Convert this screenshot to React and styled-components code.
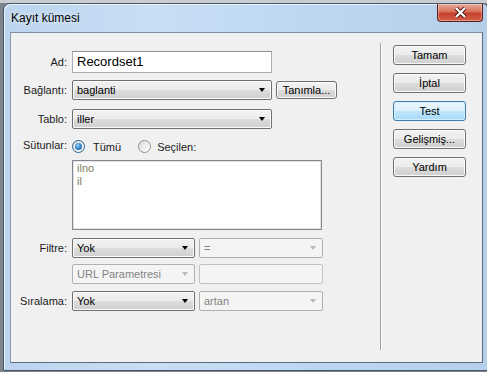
import React from 'react'
import styled, { createGlobalStyle } from 'styled-components'

const GlobalStyle = createGlobalStyle`
    html, body {
        margin: 0;
        padding: 0;
        background: #9ea4ab;
        overflow: hidden;
    }
    body {
        font-family: "Liberation Sans", Arial, sans-serif;
        font-size: 11px;
        color: #1b1b1b;
    }
`

const Page = styled.div`
    width: 487px;
    height: 372px;
    padding: 3px 0 0 3px;
    box-sizing: border-box;
    background: linear-gradient(#c9cdd2 0, #c9cdd2 3px, #7d848c 3px);
`

const Window = styled.div`
    box-sizing: border-box;
    width: 486px;
    height: 368px;
    border: 1px solid #48566a;
    border-radius: 7px 7px 2px 2px;
    padding: 0 5px 7px 6px;
    background: linear-gradient(90deg, #bcd4ee 0%, #c8def5 30%, #bfd8f2 60%, #b5cfea 100%);
    box-shadow: inset 1px 1px 0 rgba(255, 255, 255, 0.7);
    display: flex;
    flex-direction: column;
`

const TitleBar = styled.div`
    height: 28px;
    display: flex;
    justify-content: space-between;
    align-items: flex-start;
    flex-shrink: 0;
`

const Title = styled.div`
    font-size: 12px;
    color: #000;
    padding: 7px 0 0 1px;
    text-shadow: 0 0 6px rgba(255, 255, 255, 0.9);
`

const CloseButton = styled.div`
    width: 46px;
    height: 18px;
    box-sizing: border-box;
    border: 1px solid #5a2020;
    border-top: none;
    border-radius: 0 0 4px 4px;
    background: linear-gradient(#e9a99a 0%, #d8705a 45%, #c4402a 55%, #d2614a 100%);
    box-shadow: inset 0 0 0 1px rgba(255, 255, 255, 0.35);
    display: flex;
    align-items: center;
    justify-content: center;
`

const Client = styled.div`
    flex: 1;
    box-sizing: border-box;
    border: 1px solid #5c6c80;
    border-top-color: #7f8ea2;
    border-left-color: #8b9ab0;
    background: #f0f0f0;
    display: flex;
`

const Form = styled.div`
    width: 369px;
    display: flex;
    flex-direction: column;
`

const Row = styled.div`
    display: flex;
    align-items: center;
    margin-top: ${p => p.$gap}px;
`

const Label = styled.div`
    width: 56px;
    margin-right: 5px;
    text-align: right;
    white-space: nowrap;
`

const Spacer = styled.div`
    width: 61px;
    flex-shrink: 0;
`

const TextInput = styled.div`
    box-sizing: border-box;
    width: 200px;
    height: 22px;
    border: 1px solid #abadb3;
    border-top-color: #8e9096;
    background: #fff;
    font-size: 13px;
    padding: 2px 0 0 4px;
    color: #000;
`

const Select = styled.div`
    box-sizing: border-box;
    width: ${p => p.$w}px;
    height: 20px;
    margin-right: ${p => p.$mr || 0}px;
    border: 1px solid ${p => (p.$disabled ? '#adb2b5' : '#707070')};
    border-radius: 2px;
    background: ${p =>
        p.$disabled
            ? '#f4f4f4'
            : 'linear-gradient(#f2f2f2 0%, #ebebeb 50%, #dddddd 51%, #cfcfcf 100%)'};
    box-shadow: ${p => (p.$disabled ? 'none' : 'inset 0 0 0 1px #fbfbfb')};
    color: ${p => (p.$disabled ? '#838383' : '#000')};
    display: flex;
    align-items: center;
    justify-content: space-between;
    padding: 0 6px 0 4px;
    flex-shrink: 0;
`

const Arrow = styled.span`
    width: 0;
    height: 0;
    border-left: 3.5px solid transparent;
    border-right: 3.5px solid transparent;
    border-top: 4px solid ${p => (p.$disabled ? '#b8b8b8' : '#000')};
`

const PlainBox = styled.div`
    box-sizing: border-box;
    width: ${p => p.$w}px;
    height: 20px;
    border: 1px solid #c3c3c3;
    border-radius: 2px;
    background: #f4f4f4;
`

const Button = styled.div`
    box-sizing: border-box;
    width: ${p => p.$w || 73}px;
    height: ${p => p.$h || 20}px;
    border: 1px solid ${p => (p.$focus ? '#3c7fb1' : '#707070')};
    border-radius: 3px;
    background: ${p =>
        p.$focus
            ? 'linear-gradient(#eaf6fd 0%, #d9f0fc 50%, #bee6fd 51%, #a7d9f5 100%)'
            : 'linear-gradient(#f2f2f2 0%, #ebebeb 50%, #dddddd 51%, #cfcfcf 100%)'};
    box-shadow: inset 0 0 0 1px ${p => (p.$focus ? '#d6eefb' : '#fbfbfb')};
    display: flex;
    align-items: center;
    justify-content: center;
    color: #000;
    flex-shrink: 0;
`

const RadioGroup = styled.div`
    display: flex;
    align-items: center;
    padding-top: 2px;
`

const Radio = styled.span`
    box-sizing: border-box;
    width: 13px;
    height: 13px;
    border-radius: 50%;
    border: 1px solid ${p => (p.$checked ? '#2c628b' : '#8e8f8f')};
    background: linear-gradient(135deg, #dcdcdc, #ffffff);
    display: flex;
    align-items: center;
    justify-content: center;
    margin-right: ${p => p.$mr}px;
    &::after {
        content: '';
        display: ${p => (p.$checked ? 'block' : 'none')};
        width: 7px;
        height: 7px;
        border-radius: 50%;
        background: radial-gradient(circle at 40% 35%, #9ad4ff 0%, #3a8cd0 45%, #16508a 100%);
    }
`

const RadioText = styled.span`
    margin-right: ${p => p.$mr || 0}px;
    padding-top: 2px;
`

const ListBox = styled.div`
    box-sizing: border-box;
    width: 250px;
    height: 70px;
    border: 1px solid #828790;
    box-shadow: inset 0 0 0 1px #e3e3e3;
    background: #fff;
    padding: 1px 0 0 4px;
    color: #7f7e62;
    line-height: 13px;
`

const Separator = styled.div`
    width: 1px;
    margin: 10px 0 12px;
    background: #a0a0a0;
    box-shadow: 1px 0 0 #fff;
`

const ButtonColumn = styled.div`
    flex: 1;
    padding: 12px 0 0 12px;
    display: flex;
    flex-direction: column;
    gap: 8px;
`

const CloseIcon = () => (
    <svg width="13" height="11" viewBox="0 0 13 11">
        <path
            d="M2 1 L11 10 M11 1 L2 10"
            stroke="#4a1414"
            strokeWidth="4"
            fill="none"
        />
        <path
            d="M2 1 L11 10 M11 1 L2 10"
            stroke="#fff"
            strokeWidth="2.2"
            fill="none"
        />
    </svg>
)

const App = () => {
    return (
        <Page>
            <GlobalStyle />
            <Window>
                <TitleBar>
                    <Title>Kayıt kümesi</Title>
                    <CloseButton>
                        <CloseIcon />
                    </CloseButton>
                </TitleBar>
                <Client>
                    <Form>
                        <Row $gap={18}>
                            <Label>Ad:</Label>
                            <TextInput>Recordset1</TextInput>
                        </Row>
                        <Row $gap={7}>
                            <Label>Bağlantı:</Label>
                            <Select $w={200} $mr={4}>
                                baglanti
                                <Arrow />
                            </Select>
                            <Button $w={61} $h={18}>Tanımla...</Button>
                        </Row>
                        <Row $gap={9}>
                            <Label>Tablo:</Label>
                            <Select $w={200}>
                                iller
                                <Arrow />
                            </Select>
                        </Row>
                        <Row $gap={8}>
                            <Label>Sütunlar:</Label>
                            <RadioGroup>
                                <Radio $checked $mr={8} />
                                <RadioText $mr={17}>Tümü</RadioText>
                                <Radio $mr={6} />
                                <RadioText>Seçilen:</RadioText>
                            </RadioGroup>
                        </Row>
                        <Row $gap={7}>
                            <Spacer />
                            <ListBox>
                                ilno
                                <br />
                                il
                            </ListBox>
                        </Row>
                        <Row $gap={8}>
                            <Label>Filtre:</Label>
                            <Select $w={123} $mr={4}>
                                Yok
                                <Arrow />
                            </Select>
                            <Select $w={124} $disabled>
                                =
                                <Arrow $disabled />
                            </Select>
                        </Row>
                        <Row $gap={6}>
                            <Spacer />
                            <Select $w={123} $mr={4} $disabled>
                                URL Parametresi
                                <Arrow $disabled />
                            </Select>
                            <PlainBox $w={124} />
                        </Row>
                        <Row $gap={7}>
                            <Label>Sıralama:</Label>
                            <Select $w={123} $mr={4}>
                                Yok
                                <Arrow />
                            </Select>
                            <Select $w={124} $disabled>
                                artan
                                <Arrow $disabled />
                            </Select>
                        </Row>
                    </Form>
                    <Separator />
                    <ButtonColumn>
                        <Button>Tamam</Button>
                        <Button>İptal</Button>
                        <Button $focus>Test</Button>
                        <Button>Gelişmiş...</Button>
                        <Button>Yardım</Button>
                    </ButtonColumn>
                </Client>
            </Window>
        </Page>
    )
}

export default App
